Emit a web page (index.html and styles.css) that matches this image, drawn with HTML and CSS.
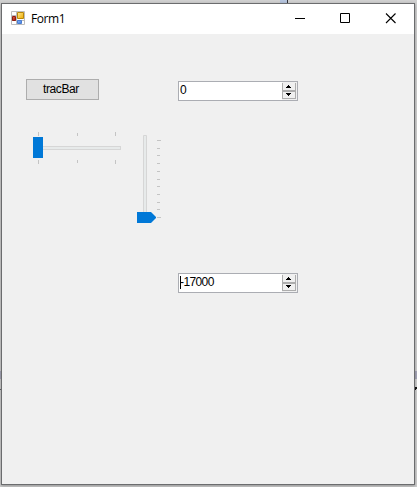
FILE: index.html
```html
<!DOCTYPE html>
<html lang="en">
<head>
<meta charset="utf-8">
<title>Form1</title>
<link rel="stylesheet" href="styles.css">
</head>
<body>
<svg class="desktop" width="417" height="487" shape-rendering="crispEdges" aria-hidden="true">
  <path fill="#b4c3dc" d="M280 0h7v3h-7z"/>
  <path fill="#33343c" d="M287 0h1v3h-1z"/>
  <path fill="#a7a7b9" d="M0 371h1v8H0zM415 371h2v8h-2z"/>
  <path fill="#66666a" d="M0 389h1v1H0z"/>
  <path fill="#151515" d="M415 387h2v2h-2zM415 389h1v1h-1z"/>
</svg>
<main class="window">
  <header class="titlebar">
    <svg class="app-icon" width="14" height="14" viewBox="0 0 14 14" aria-hidden="true">
      <defs>
        <linearGradient id="gold" x2="1" y2="1"><stop stop-color="#ffe991"/><stop offset="1" stop-color="#eeac00"/></linearGradient>
        <linearGradient id="red" x2="1" y2="1"><stop stop-color="#e46a4e"/><stop offset="1" stop-color="#a01205"/></linearGradient>
        <linearGradient id="blue" x2="1" y2="1"><stop stop-color="#8fbcff"/><stop offset="1" stop-color="#3b78dc"/></linearGradient>
      </defs>
      <path fill="#fff" stroke="#bdbdbd" d="M.5.5h13v13H.5zM5.500.5v13M.5 4.500h5M.5 9.500h13"/>
      <path fill="url(#gold)" stroke="#b98708" d="M6.500 1.500h6v6h-6z"/>
      <path fill="url(#red)" stroke="#8f1c12" d="M1.500 5.500h3v4h-3z"/>
      <path fill="url(#blue)" stroke="#4a7cd0" d="M6.500 9.500h4v3h-4z"/>
    </svg>
    <h1 class="title">Form1</h1>
    <svg class="controls" width="103" height="11" viewBox="0 0 103 11" fill="none" stroke="#000" aria-hidden="true">
      <path d="M0 5.500h10M45.500.5h9v9h-9z"/>
      <path d="M91 .5l9.500 9.500M100.500.5L91 10" stroke-width="1.100"/>
    </svg>
  </header>
  <section class="client">
    <div class="left">
      <button class="button">tracBar</button>
      <div class="tracks">
        <svg width="88" height="32" viewBox="0 0 88 32" shape-rendering="crispEdges">
          <path fill="#c4c4c4" d="M5 0h1v4H5zM44 1h1v3h-1zM82 0h1v4h-1zM5 28h1v4H5zM44 28h1v3h-1zM82 28h1v4h-1z"/>
          <path fill="#e7eaea" stroke="#d6d6d6" d="M4.500 14.500h83v3h-83z"/>
          <path fill="#0078d7" d="M0 5h10v21H0z"/>
        </svg>
        <svg class="vertical" width="24" height="88" viewBox="0 0 24 88">
          <path fill="#e7eaea" stroke="#d6d6d6" d="M6.500.5h3v83h-3z"/>
          <path fill="#c4c4c4" d="M20 5h4v1h-4zM20 13h3v1h-3zM20 20h3v1h-3zM20 28h3v1h-3zM20 36h3v1h-3zM20 44h3v1h-3zM20 51h3v1h-3zM20 59h3v1h-3zM20 67h3v1h-3zM20 74h3v1h-3zM20 82h4v1h-4z"/>
          <path fill="#0078d7" d="M0 77h14l5 5v1l-5 5H0z"/>
        </svg>
      </div>
    </div>
    <div class="right">
      <div class="numeric">
        <span class="value">0</span>
        <svg class="spin" width="15" height="18" viewBox="0 0 15 18" shape-rendering="crispEdges">
          <path fill="#f0f0f0" stroke="#adadad" d="M.5.5h13v8H.5zM.5 9.500h13v7H.5z"/>
          <path fill="#f0f0f0" d="M0 0h15v1H0z"/>
          <path d="M6 3h1v1h1v1h1v1H4V5h1V4h1zM4 11h5v1H8v1H7v1H6v-1H5v-1H4z"/>
        </svg>
      </div>
      <div class="numeric">
        <span class="value focused">-17000</span>
        <svg class="spin" width="15" height="18" viewBox="0 0 15 18" shape-rendering="crispEdges">
          <path fill="#f0f0f0" stroke="#adadad" d="M.5.5h13v8H.5zM.5 9.500h13v7H.5z"/>
          <path fill="#f0f0f0" d="M0 0h15v1H0z"/>
          <path d="M6 3h1v1h1v1h1v1H4V5h1V4h1zM4 11h5v1H8v1H7v1H6v-1H5v-1H4z"/>
        </svg>
      </div>
    </div>
  </section>
</main>
</body>
</html>
```
FILE: styles.css
```css
* { box-sizing: border-box; }

body {
  margin: 0;
  width: 417px;
  height: 487px;
  padding: 3px 2px 2px 1px;
  overflow: hidden;
  background: #d0d0d0;
  font-family: "Liberation Sans", Arial, sans-serif;
  font-size: 12px;
  color: #000;
}

svg { display: block; flex: none; }

.desktop { position: absolute; top: 0; left: 0; }

.window {
  position: relative;
  width: 414px;
  height: 482px;
  border: 1px solid #6b6c6e;
  background: #f0f0f0;
  box-shadow: 0 1px 3px rgba(0, 0, 0, .3);
}

.titlebar {
  display: flex;
  height: 30px;
  padding: 7px 16px 0 9px;
  background: #fff;
}

.title {
  margin: 0 0 0 6px;
  font: 12px/16px "Open Sans", sans-serif;
  letter-spacing: -.4px;
}

.controls { margin: 2px 0 0 auto; }

.client { display: flex; padding: 45px 0 0 24px; }

.left { width: 152px; }

.button {
  display: block;
  width: 73px;
  height: 21px;
  padding: 0 3px 0 0;
  border: 1px solid #adadad;
  background: #e1e1e1;
  color: #000;
  font: 12px/19px "Liberation Sans", Arial, sans-serif;
  letter-spacing: -.4px;
}

.tracks { display: flex; padding: 32px 0 0 7px; gap: 16px; }

.vertical { margin-top: 3px; }

.right {
  display: flex;
  flex-direction: column;
  gap: 172px;
  padding-top: 2px;
}

.numeric {
  display: flex;
  justify-content: space-between;
  width: 120px;
  height: 20px;
  border: 1px solid #abadb3;
  background: #fff;
}

.value {
  padding-left: 1px;
  line-height: 17px;
  letter-spacing: -.6px;
}

.focused { position: relative; }

.focused::before {
  content: "";
  position: absolute;
  top: 2px;
  left: 1px;
  width: 1px;
  height: 13px;
  background: #000;
}

.spin { background: #f0f0f0; }
```
